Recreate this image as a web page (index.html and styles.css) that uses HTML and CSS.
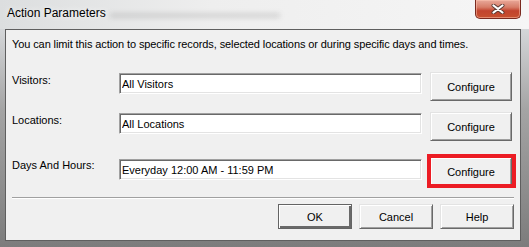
FILE: index.html
```html
<!DOCTYPE html>
<html lang="en">
<head>
    <meta charset="UTF-8">
    <title>Action Parameters</title>
    <link rel="stylesheet" href="styles.css">
</head>
<body>
    <div class="window">
        <!-- Title bar -->
        <div class="titlebar">
            <span class="title">Action Parameters</span>
            <span class="ghost"></span>
            <button class="close" type="button" aria-label="Close">
                <svg width="14" height="10" viewBox="0 0 14 10">
                    <path d="M2.5 1.5 L11.5 8.5 M11.5 1.5 L2.5 8.5" stroke="#5b3a33" stroke-width="4" stroke-linecap="round" fill="none"/>
                    <path d="M2.5 1.5 L11.5 8.5 M11.5 1.5 L2.5 8.5" stroke="#fff" stroke-width="2.2" stroke-linecap="round" fill="none"/>
                </svg>
            </button>
        </div>

        <!-- Dialog body -->
        <div class="client">
            <p class="intro">You can limit this action to specific records, selected locations or during specific days and times.</p>

            <div class="field-row">
                <label class="field-label" for="visitors">Visitors:</label>
                <input class="field-input" id="visitors" type="text" value="All Visitors" readonly>
                <button class="btn configure" type="button">Configure</button>
            </div>

            <div class="field-row">
                <label class="field-label" for="locations">Locations:</label>
                <input class="field-input" id="locations" type="text" value="All Locations" readonly>
                <button class="btn configure" type="button">Configure</button>
            </div>

            <div class="field-row days">
                <label class="field-label" for="hours">Days And Hours:</label>
                <input class="field-input" id="hours" type="text" value="Everyday 12:00 AM - 11:59 PM" readonly>
                <span class="marked">
                    <button class="btn configure" type="button">Configure</button>
                    <span class="highlight"></span>
                </span>
            </div>

            <div class="separator"></div>

            <div class="actions">
                <button class="btn action default" type="button">OK</button>
                <button class="btn action" type="button">Cancel</button>
                <button class="btn action" type="button">Help</button>
            </div>
        </div>
    </div>
</body>
</html>
```

FILE: styles.css
```css
body {
    margin: 0;
    padding: 0;
    font-family: 'Liberation Sans', Arial, sans-serif;
    font-size: 11px;
    color: #000;
    background: #fff;
}

.window {
    width: 529px;
    height: 247px;
    display: flex;
    flex-direction: column;
    background: linear-gradient(#e4e6e8 0, #d4d6d8 30px, #a4a4a4 110px, #8a8a8a 200px, #7c7c7c 100%);
}

.titlebar {
    height: 29px;
    display: flex;
    align-items: flex-start;
    background: linear-gradient(90deg, #dcdedf 0, #eeeeee 40%, #f6f6f6 100%);
}

.title {
    padding: 6px 0 0 7px;
    font-size: 12px;
    line-height: 15px;
    color: #000;
    text-shadow: 0 0 6px #fff;
}

.ghost {
    width: 170px;
    height: 5px;
    margin: 13px 0 0 4px;
    background: rgba(60, 60, 60, 0.14);
    filter: blur(2.5px);
}

.close {
    width: 46px;
    height: 19px;
    margin: 0 8px 0 auto;
    padding: 0;
    display: flex;
    align-items: center;
    justify-content: center;
    border: 1px solid #7a2a1f;
    border-top: none;
    border-radius: 0 0 5px 5px;
    background: linear-gradient(#e9a99a 0, #d77d68 40%, #c2442e 60%, #c7502f 100%);
    box-shadow: inset 0 0 0 1px rgba(255, 200, 180, 0.5);
}

.client {
    box-sizing: border-box;
    height: 212px;
    margin: 0 8px 0 5px;
    padding: 0 6px;
    border: 1px solid #5f5f5f;
    background: #f0f0f0;
}

.intro {
    margin: 7px 0 0;
    line-height: 14px;
    letter-spacing: -0.1px;
}

.field-row {
    display: flex;
    align-items: flex-start;
    height: 29px;
    margin-top: 11px;
}

.field-row:first-of-type {
    margin-top: 21px;
}

.field-row.days {
    margin-top: 16px;
}

.field-label {
    width: 107px;
    padding-top: 1px;
    line-height: 14px;
}

.field-input {
    box-sizing: border-box;
    width: 303px;
    height: 21px;
    margin: 1px 8px 0 0;
    padding: 0 2px;
    border: 1px solid;
    border-color: #a0a0a0 #ffffff #ffffff #a0a0a0;
    box-shadow: inset 1px 1px #696969, inset -1px -1px #e3e3e3;
    background: #fff;
    font-family: inherit;
    font-size: 11px;
    color: #000;
    outline: none;
}

.field-row.days .field-input {
    margin-top: 2px;
}

.btn {
    box-sizing: border-box;
    padding: 0;
    border: 1px solid;
    border-color: #e3e3e3 #696969 #696969 #e3e3e3;
    box-shadow: inset 1px 1px #ffffff, inset -1px -1px #a0a0a0;
    background: #f0f0f0;
    font-family: inherit;
    font-size: 11px;
    color: #000;
}

.configure {
    width: 82px;
    height: 29px;
}

.marked {
    position: relative;
    display: flex;
}

.highlight {
    position: absolute;
    left: -3px;
    top: -3px;
    right: -4px;
    bottom: -2px;
    border: 4px solid #ec1c24;
}

.separator {
    margin-top: 11px;
    border-top: 1px solid #a0a0a0;
    border-bottom: 1px solid #ffffff;
}

.actions {
    display: flex;
    justify-content: flex-end;
    gap: 7px;
    margin-top: 5px;
}

.action {
    width: 74px;
    height: 25px;
}

.action.default {
    border-color: #646464;
    box-shadow: inset 1px 1px #ffffff, inset -2px -2px #696969;
}
```
